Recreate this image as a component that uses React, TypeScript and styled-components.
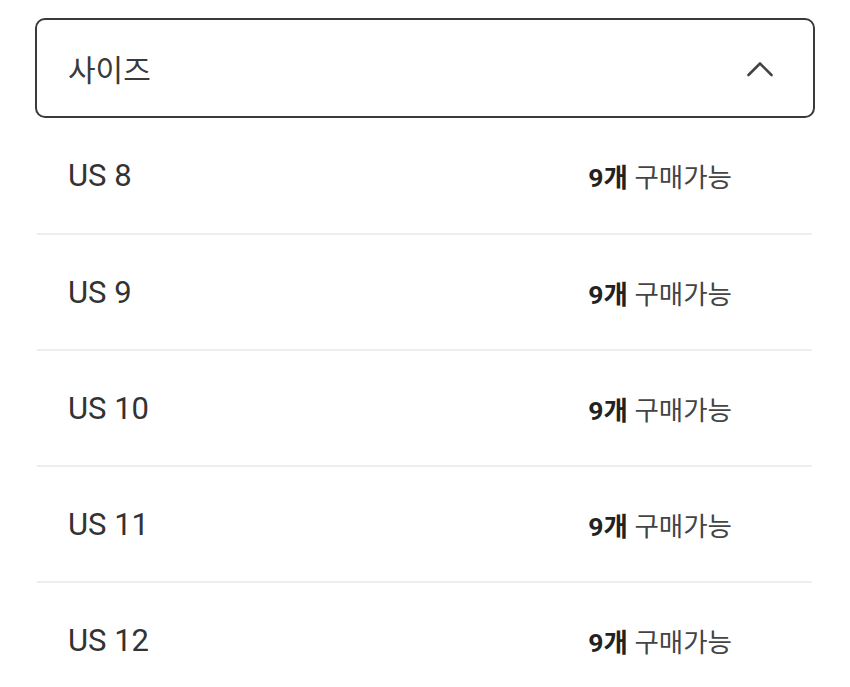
import React, { useState } from 'react';
import styled, { createGlobalStyle } from 'styled-components';

const GlobalStyle = createGlobalStyle`
  body {
    margin: 0;
    background: #fff;
    font-family: Roboto, "Noto Sans CJK KR", sans-serif;
    color: #333;
  }
`;

const Page = styled.div`
  padding: 18px 35px 0;
`;

const SelectBox = styled.button`
  display: flex;
  align-items: center;
  justify-content: space-between;
  width: 100%;
  height: 100px;
  padding: 0 40px 0 31px;
  border: 2px solid #3a3a3a;
  border-radius: 10px;
  background: #fff;
  font-family: inherit;
  font-size: 30px;
  color: #3a3a3a;
  cursor: pointer;
`;

const Chevron = styled.svg<{ $open: boolean }>`
  width: 26px;
  height: 26px;
  margin-top: 2px;
  transform: rotate(${p => (p.$open ? 0 : 180)}deg);
`;

const List = styled.ul`
  list-style: none;
  margin: 0 3px 0 2px;
  padding: 0;
`;

const Row = styled.li`
  display: flex;
  align-items: center;
  justify-content: space-between;
  height: 114px;
  padding: 0 80px 0 31px;
  border-bottom: 2px solid #eeeeee;
  font-size: 31px;
  color: #333;

  &:first-child {
    height: 115px;
  }

  &:last-child {
    border-bottom: none;
  }
`;

const Stock = styled.span`
  font-size: 26.5px;
  color: #444;
`;

const Count = styled.b`
  font-weight: 700;
  color: #222;
`;

const sizes = ['US 8', 'US 9', 'US 10', 'US 11', 'US 12'];

export default function App() {
  const [open, setOpen] = useState(true);

  return (
    <Page>
      <GlobalStyle />
      <SelectBox onClick={() => setOpen(o => !o)}>
        사이즈
        <Chevron $open={open} viewBox="0 0 26 26" fill="none" stroke="#444" strokeWidth="2.6" strokeLinecap="round" strokeLinejoin="round">
          <path d="M1.5 19 L13 7.5 L24.5 19" />
        </Chevron>
      </SelectBox>
      {open && (
        <List>
          {sizes.map(size => (
            <Row key={size}>
              {size}
              <Stock>
                <Count>9개</Count> 구매가능
              </Stock>
            </Row>
          ))}
        </List>
      )}
    </Page>
  );
}
